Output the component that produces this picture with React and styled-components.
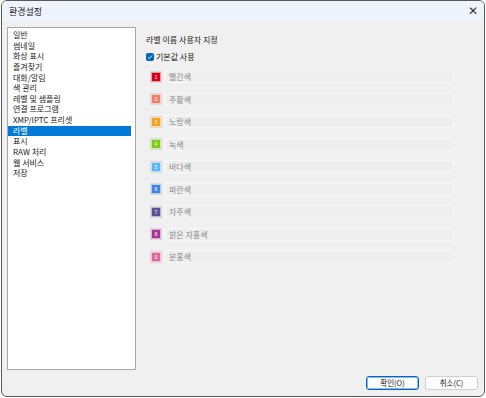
import React from "react";
import styled, { createGlobalStyle } from "styled-components";

const GlobalStyle = createGlobalStyle`
  html, body {
    margin: 0;
    padding: 0;
    background: #ffffff;
    font-family: "Noto Sans CJK KR", "Noto Sans", sans-serif;
  }
`;

const Window = styled.div`
  margin-left: 1px;
  width: 482px;
  height: 395px;
  border: 1px solid #5a5a5a;
  border-radius: 6px;
  background: #f0f0f0;
  display: flex;
  flex-direction: column;
  overflow: hidden;
`;

const TitleBar = styled.div`
  height: 20px;
  flex-shrink: 0;
  background: #eef4fb;
  display: flex;
  align-items: center;
  justify-content: space-between;
  padding: 0 6px 0 7px;
  font-size: 9px;
  color: #1a1a1a;
`;

const Close = styled.span`
  font-size: 12px;
  color: #333;
  font-family: "DejaVu Sans", sans-serif;
  line-height: 1;
`;

const Body = styled.div`
  flex: 1;
  display: flex;
  padding: 6px 0 0 5px;
`;

const NavList = styled.ul`
  list-style: none;
  margin: 0;
  padding: 2px 4px 2px 0;
  width: 123px;
  height: 337px;
  background: #ffffff;
  border: 1px solid #a8a8a8;
`;

const NavItem = styled.li`
  height: 10.65px;
  line-height: 10.65px;
  padding-left: 5px;
  font-size: 8px;
  color: ${(p) => (p.$active ? "#ffffff" : "#1a1a1a")};
  background: ${(p) => (p.$active ? "#0078d7" : "transparent")};
  white-space: nowrap;
  overflow: hidden;
`;

const Panel = styled.div`
  flex: 1;
  padding: 6px 0 0 10px;
  display: flex;
  flex-direction: column;
`;

const Heading = styled.div`
  font-size: 8px;
  color: #1a1a1a;
  height: 13px;
  line-height: 13px;
`;

const CheckRow = styled.label`
  display: flex;
  align-items: center;
  gap: 2px;
  margin-top: 5px;
  font-size: 8px;
  color: #1a1a1a;
`;

const CheckBox = styled.span`
  width: 8px;
  height: 8px;
  border-radius: 2px;
  background: #0067c0;
  display: flex;
  align-items: center;
  justify-content: center;
`;

const LabelRows = styled.div`
  display: flex;
  flex-direction: column;
  gap: 9.5px;
  margin-top: 8px;
  padding-left: 5px;
`;

const LabelRow = styled.div`
  display: flex;
  align-items: center;
  gap: 4px;
  height: 13px;
`;

const Swatch = styled.span`
  width: 10px;
  height: 10px;
  box-sizing: border-box;
  border: 1px solid rgba(255, 255, 255, 0.6);
  outline: 1px solid #dcdcdc;
  background: ${(p) => p.$color};
  color: #ffffff;
  font-size: 5px;
  font-family: "Liberation Sans", sans-serif;
  display: flex;
  align-items: center;
  justify-content: center;
`;

const NameBox = styled.div`
  width: 284px;
  height: 11px;
  border: 1px solid #f8f8f8;
  background: #eeeeee;
  font-size: 8px;
  line-height: 11px;
  color: #8a8a8a;
  padding-left: 3px;
`;

const Footer = styled.div`
  display: flex;
  justify-content: flex-end;
  gap: 6px;
  padding: 6px 6px 6px 0;
`;

const Button = styled.button`
  width: 53px;
  height: 14px;
  padding: 0;
  border-radius: 3px;
  border: 1px solid ${(p) => (p.$primary ? "#0067c0" : "#d0d0d0")};
  box-shadow: ${(p) => (p.$primary ? "inset 0 0 0 1px #8fbbe6" : "none")};
  background: #fdfdfd;
  font-family: "Noto Sans CJK KR", sans-serif;
  font-size: 7.5px;
  color: #1a1a1a;
  line-height: 1;
`;

const navItems = [
  "일반",
  "썸네일",
  "화상 표시",
  "즐겨찾기",
  "대화/알림",
  "색 관리",
  "레벨 및 샘플링",
  "연결 프로그램",
  "XMP/IPTC 프리셋",
  "라벨",
  "표시",
  "RAW 처리",
  "웹 서비스",
  "저장",
];

const labels = [
  { n: 1, name: "빨간색", color: "#d9001b" },
  { n: 2, name: "주황색", color: "#ef7f6c" },
  { n: 3, name: "노랑색", color: "#f6a21c" },
  { n: 4, name: "녹색", color: "#7ccc14" },
  { n: 5, name: "바다색", color: "#5cb8f2" },
  { n: 6, name: "파란색", color: "#3f87e0" },
  { n: 7, name: "자주색", color: "#59519a" },
  { n: 8, name: "밝은 자홍색", color: "#a5349a" },
  { n: 9, name: "분홍색", color: "#e0669a" },
];

export default function App() {
  return (
    <>
      <GlobalStyle />
      <Window>
        <TitleBar>
          <span>환경설정</span>
          <Close>✕</Close>
        </TitleBar>
        <Body>
          <NavList>
            {navItems.map((item) => (
              <NavItem key={item} $active={item === "라벨"}>
                {item}
              </NavItem>
            ))}
          </NavList>
          <Panel>
            <Heading>라벨 이름 사용자 지정</Heading>
            <CheckRow>
              <CheckBox>
                <svg width="6" height="6" viewBox="0 0 6 6">
                  <path d="M1 3.2 L2.4 4.5 L5 1.5" fill="none" stroke="#fff" strokeWidth="0.9" />
                </svg>
              </CheckBox>
              기본값 사용
            </CheckRow>
            <LabelRows>
              {labels.map((l) => (
                <LabelRow key={l.n}>
                  <Swatch $color={l.color}>{l.n}</Swatch>
                  <NameBox>{l.name}</NameBox>
                </LabelRow>
              ))}
            </LabelRows>
          </Panel>
        </Body>
        <Footer>
          <Button $primary>확인(O)</Button>
          <Button>취소(C)</Button>
        </Footer>
      </Window>
    </>
  );
}
